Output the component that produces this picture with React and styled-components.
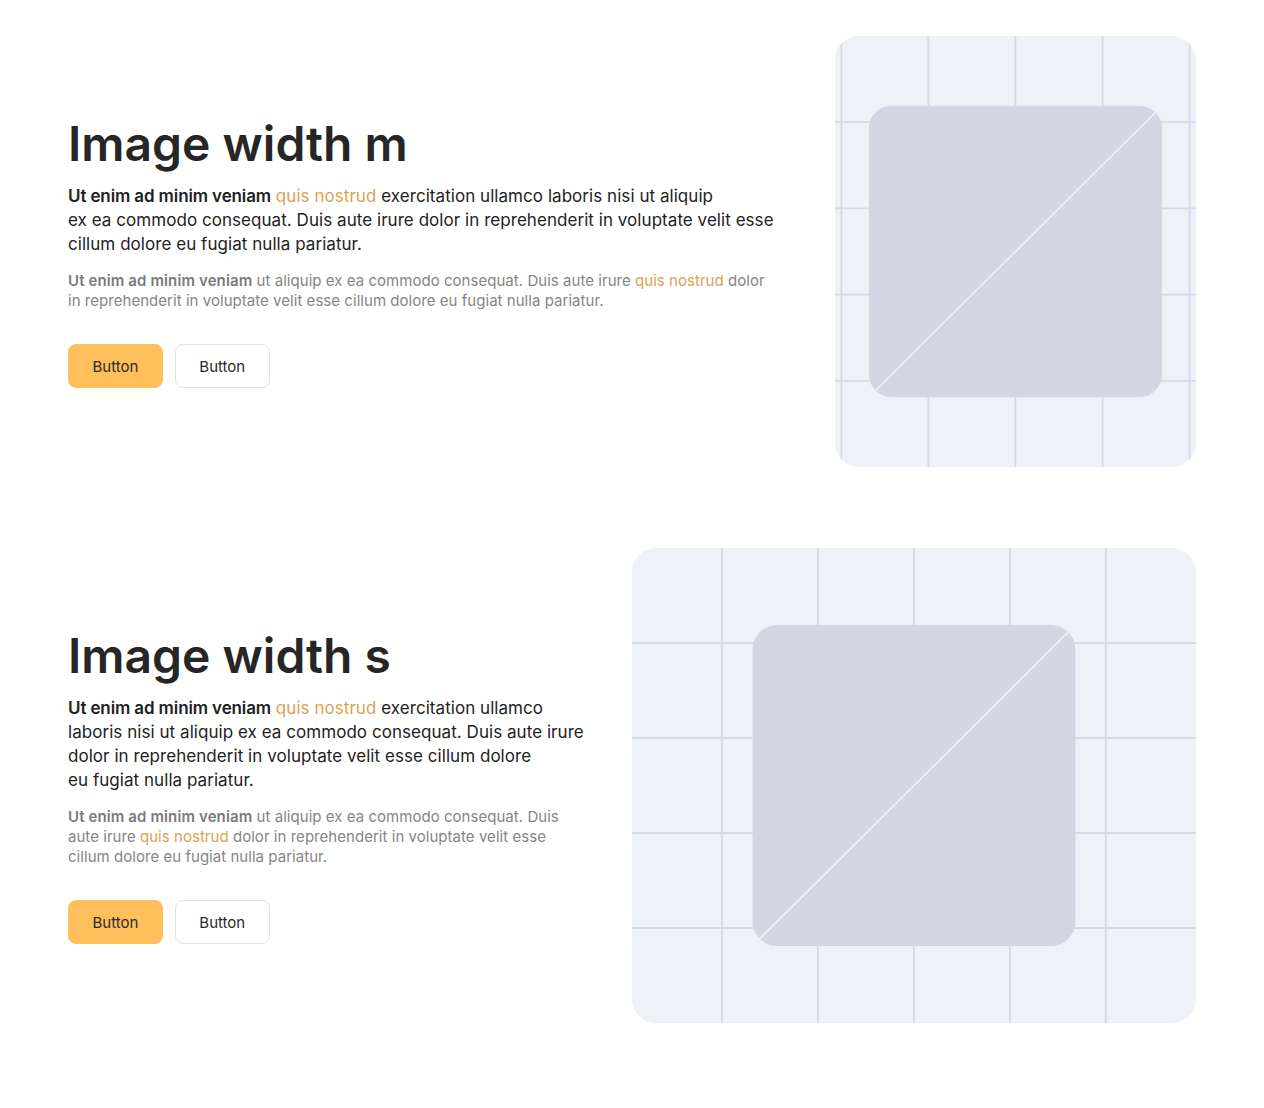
import React from 'react';
import styled, { createGlobalStyle } from 'styled-components';

const GlobalStyle = createGlobalStyle`
  body {
    margin: 0;
    background: #ffffff;
    font-family: Inter, "Noto Sans", sans-serif;
    -webkit-font-smoothing: antialiased;
  }
`;

const Page = styled.div`
  display: flex;
  flex-direction: column;
  gap: 81px;
  padding: 36px 68px 85px;
`;

const Section = styled.section`
  display: flex;
  align-items: center;
  gap: 48px;
`;

const TextCol = styled.div`
  flex: 1;
  min-width: 0;
  display: flex;
  flex-direction: column;
  align-items: flex-start;
`;

const Title = styled.h2`
  margin: 0 0 12px;
  font-size: 48px;
  line-height: 1.2;
  font-weight: 600;
  color: #262626;
`;

const Lead = styled.p`
  margin: 0 0 15px;
  font-size: 17px;
  line-height: 24px;
  letter-spacing: 0.05px;
  color: #222222;

  b {
    font-weight: 600;
    letter-spacing: -0.12px;
  }
`;

const Small = styled.p`
  margin: 0 0 33px;
  font-size: 15px;
  line-height: 20px;
  letter-spacing: 0.04px;
  color: #858585;

  b {
    font-weight: 600;
    letter-spacing: 0.12px;
    color: #7a7a7a;
  }
`;

const Accent = styled.span`
  color: #dba254;
`;

const Buttons = styled.div`
  display: flex;
  gap: 12px;
`;

const Button = styled.button`
  height: 44px;
  padding: 0 23.5px;
  border-radius: 8px;
  font-family: inherit;
  font-size: 15px;
  color: #2a2a2a;
  cursor: pointer;
  background: ${({ $primary }) => ($primary ? '#ffbf5b' : '#ffffff')};
  border: 1px solid ${({ $primary }) => ($primary ? '#ffbf5b' : '#e3e3e3')};
`;

const ImageCard = styled.div`
  flex: 0 0 ${({ $width }) => $width};
  height: ${({ $height }) => $height}px;
  border-radius: 24px;
  overflow: hidden;
  background: #eef1f8;

  svg {
    display: block;
    width: 100%;
    height: 100%;
  }
`;

const Placeholder = ({ id }) => {
  const cols = [-5, -4, -3, -2, -1, 0, 1, 2, 3, 4, 5].map((k) => 400 + k * 101);
  const rows = [100, 200, 300, 400];
  const w = 340;
  const h = 338;
  const x = 400 - w / 2;
  const y = 250 - h / 2;
  return (
    <svg viewBox="0 0 800 500" preserveAspectRatio="xMidYMid slice">
      <defs>
        <clipPath id={id}>
          <rect x={x} y={y} width={w} height={h} rx="26" />
        </clipPath>
      </defs>
      {cols.map((c) => (
        <line key={'c' + c} x1={c} y1="0" x2={c} y2="500" stroke="#d4d9e6" strokeWidth="2" />
      ))}
      {rows.map((r) => (
        <line key={'r' + r} x1="-400" y1={r} x2="1200" y2={r} stroke="#d4d9e6" strokeWidth="2" />
      ))}
      <rect x={x} y={y} width={w} height={h} rx="26" fill="#d0d7e3" />
      <line
        x1={x}
        y1={y + h}
        x2={x + w}
        y2={y}
        stroke="#f3f5f9"
        strokeWidth="1.6"
        clipPath={`url(#${id})`}
      />
    </svg>
  );
};

const Block = ({ title, lead, small, imageWidth, imageHeight, id }) => (
  <Section>
    <TextCol>
      <Title>{title}</Title>
      <Lead>{lead}</Lead>
      <Small>{small}</Small>
      <Buttons>
        <Button $primary>Button</Button>
        <Button>Button</Button>
      </Buttons>
    </TextCol>
    <ImageCard $width={imageWidth} $height={imageHeight}>
      <Placeholder id={id} />
    </ImageCard>
  </Section>
);

export default function App() {
  return (
    <>
      <GlobalStyle />
      <Page>
        <Block
          title="Image width m"
          imageWidth="32%"
          imageHeight={431}
          id="clip-m"
          lead={
            <>
              <b>Ut enim ad minim veniam</b> <Accent>quis nostrud</Accent> exercitation ullamco laboris nisi ut
              aliquip
              <br />
              ex ea commodo consequat. Duis aute irure dolor in reprehenderit in voluptate velit esse
              <br />
              cillum dolore eu fugiat nulla pariatur.
            </>
          }
          small={
            <>
              <b>Ut enim ad minim veniam</b> ut aliquip ex ea commodo consequat. Duis aute irure{' '}
              <Accent>quis nostrud</Accent> dolor
              <br />
              in reprehenderit in voluptate velit esse cillum dolore eu fugiat nulla pariatur.
            </>
          }
        />
        <Block
          title="Image width s"
          imageWidth="50%"
          imageHeight={475}
          id="clip-s"
          lead={
            <>
              <b>Ut enim ad minim veniam</b> <Accent>quis nostrud</Accent> exercitation ullamco
              <br />
              laboris nisi ut aliquip ex ea commodo consequat. Duis aute irure
              <br />
              dolor in reprehenderit in voluptate velit esse cillum dolore
              <br />
              eu fugiat nulla pariatur.
            </>
          }
          small={
            <>
              <b>Ut enim ad minim veniam</b> ut aliquip ex ea commodo consequat. Duis
              <br />
              aute irure <Accent>quis nostrud</Accent> dolor in reprehenderit in voluptate velit esse
              <br />
              cillum dolore eu fugiat nulla pariatur.
            </>
          }
        />
      </Page>
    </>
  );
}
